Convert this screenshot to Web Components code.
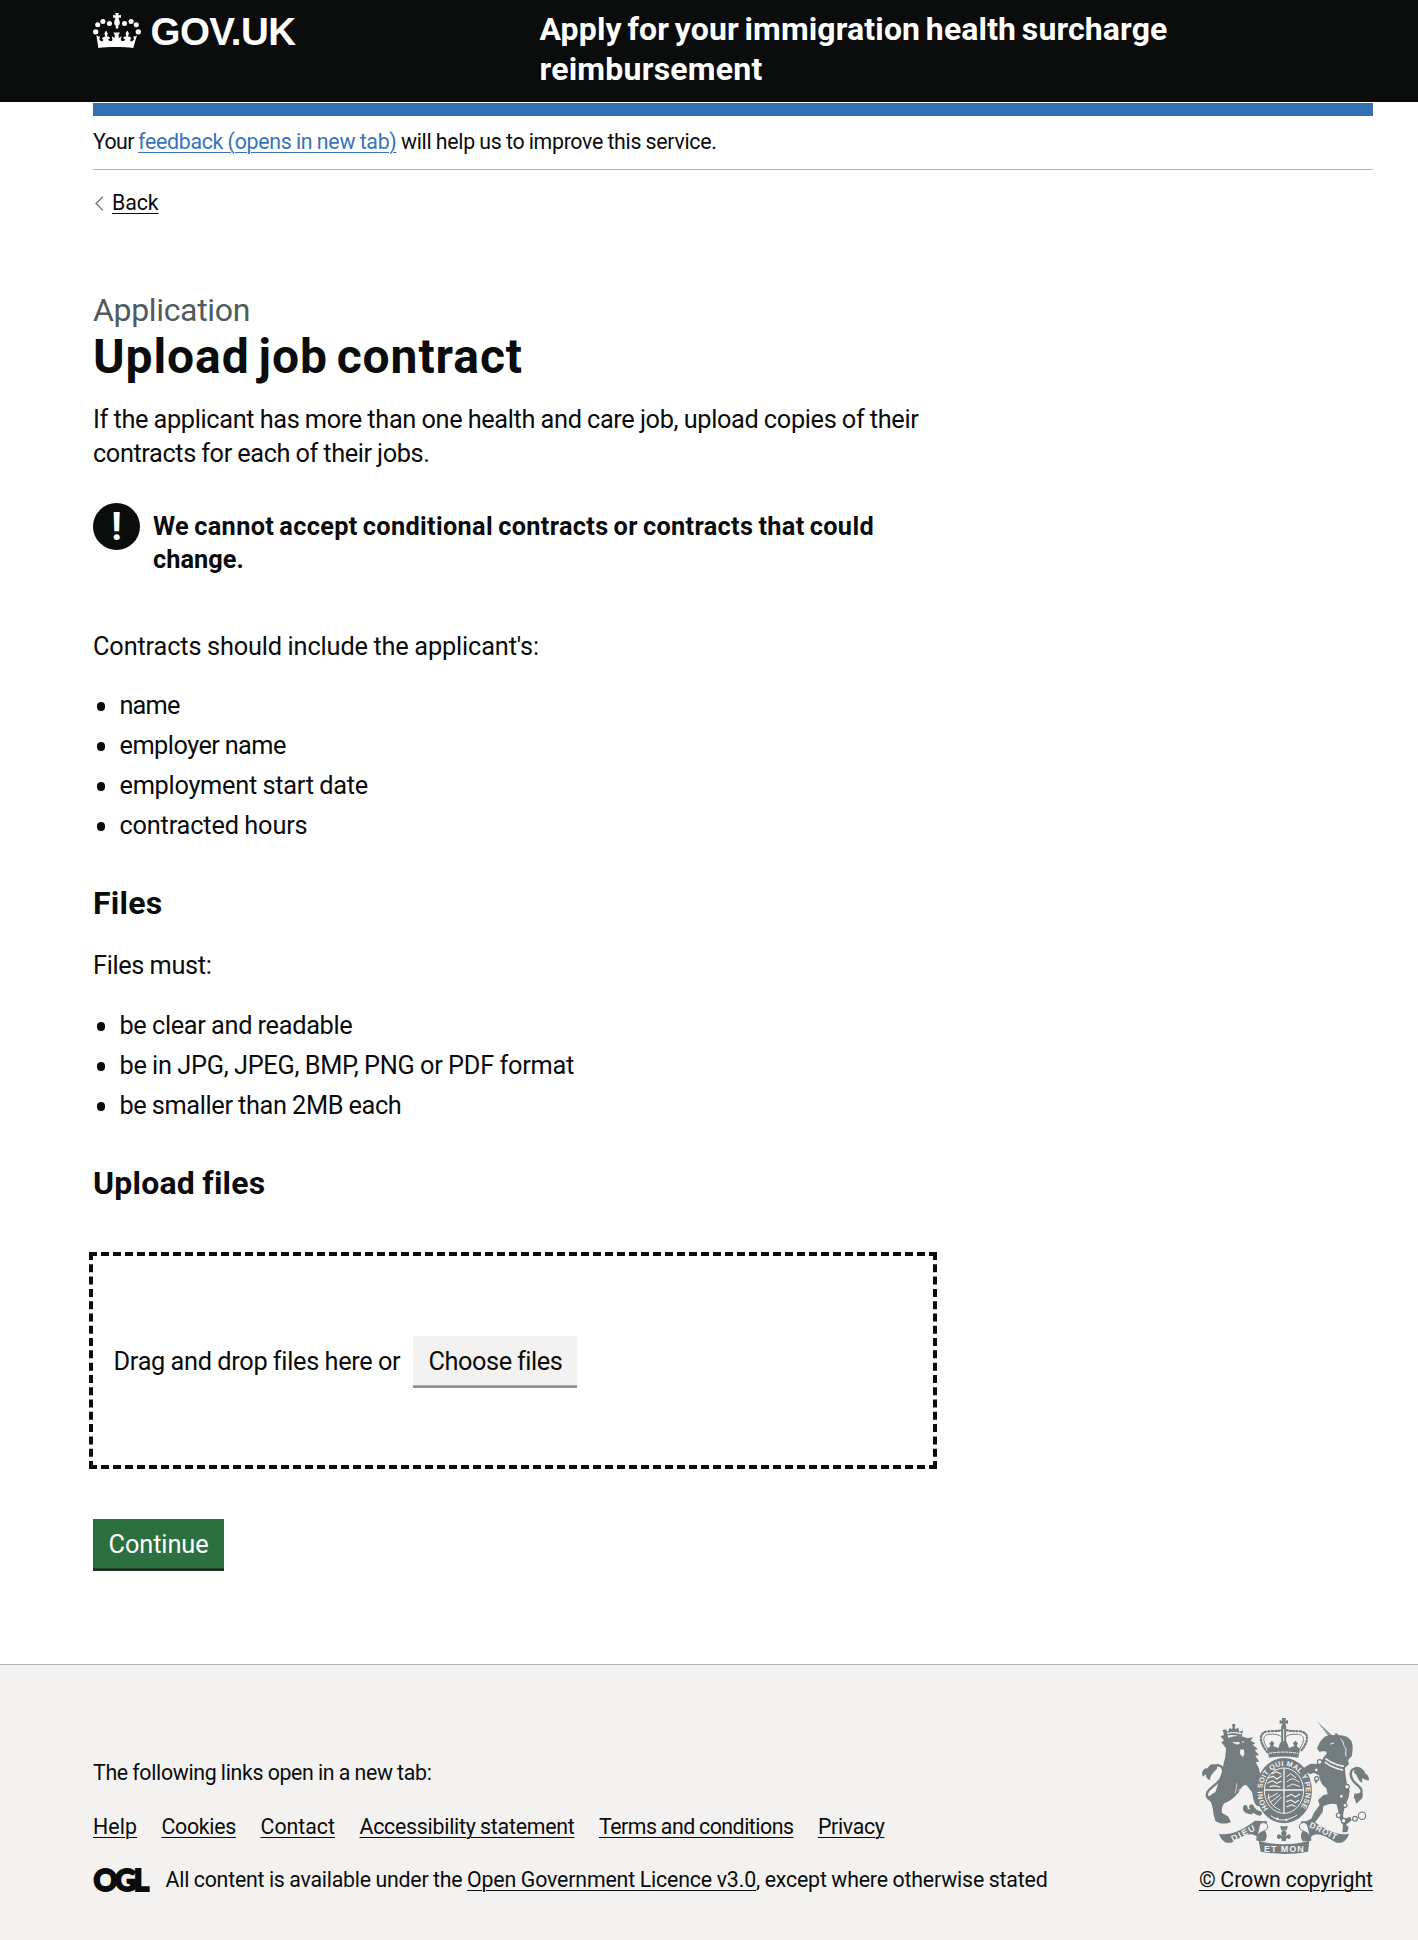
<!DOCTYPE html>
<html lang="en">
<head>
<meta charset="utf-8">
<title>Upload job contract</title>
<style>
body{margin:0;background:#fff;color:#0b0c0c;font-family:Roboto,"Liberation Sans",sans-serif;font-size:25.33px;line-height:33.33px;word-spacing:-.5px}
</style>
</head>
<body>
<surcharge-page></surcharge-page>
<script>
const define=(name,html,after)=>customElements.define(name,class extends HTMLElement{
  connectedCallback(){
    if(this.shadowRoot)return;
    this.attachShadow({mode:'open'}).innerHTML=html;
    if(after)after(this);
  }
});

/* One line of text tracked so that it fills the measure given in "w". */
define('fit-text','<style>:host{display:inline-block;white-space:nowrap}:host([block]){display:table}:host([u]){text-decoration:underline;text-decoration-thickness:1px;text-underline-offset:3px}</style><slot></slot>',el=>{
  const w=parseFloat(el.getAttribute('w'));
  const r=document.createRange();
  r.selectNodeContents(el);
  const now=r.getBoundingClientRect().width;
  el.style.letterSpacing=((w-now)/el.textContent.length).toFixed(4)+'px';
});

define('gov-crown',`<style>:host{display:block;width:48px;height:35px}svg{display:block}</style>
<svg width="48" height="35" viewBox="0 0 143 104" fill="#fff">
<circle cx="8" cy="56" r="8"/><circle cx="14" cy="35" r="7.5"/><circle cx="29.500" cy="25" r="7.500"/><circle cx="49" cy="31" r="7.500"/>
<circle cx="135" cy="56" r="8"/><circle cx="129" cy="35" r="7.500"/><circle cx="113.500" cy="25" r="7.500"/><circle cx="94" cy="31" r="7.500"/>
<path d="M66 0h11l-2 7 8-2v10l-7-2c0 4 4 10 4 16 0 5-3 7-5 9l1 4-4.500 6-4.500-6 1-4c-2-2-5-4-5-9 0-6 4-12 4-16l-7 2V5l8 2z"/>
<path d="M10 66l6 4 5-1-2 9c4 8 10 8 12 2l-5-5 6-4c3-1 5 0 5 0l-3-10 5-9 5 9-3 10c4-2 9 0 10 4l-6 4c3 6 11 6 13 1l-2-11 8 5 1-8-4-8h19l-4 8 1 8 8-5-2 11c2 5 10 5 13-1l-6-4c1-4 6-6 10-4l-3-10 5-9 5 9-3 10s3-2 6 0l5 4-5 5c2 6 8 6 12-2l-2-9 5 1 6-4-11 38c-26-4-78-4-104 0z"/>
</svg>`);

define('site-header',`<style>
:host{display:block;background:#0b0c0c;color:#fff;height:102px;overflow:hidden}
.in{display:grid;grid-template-columns:446.500px 1fr;width:1280px;margin-left:93px}
.logo{display:flex;align-items:flex-start;gap:9.500px;padding-top:13px}
.word{font-family:"Liberation Sans",sans-serif;font-size:38.500px;font-weight:700;line-height:40px;margin-top:-1.500px}
.name{font-size:32px;line-height:40px;font-weight:700;padding-top:9px;word-spacing:-2.400px}
</style><div class="in"><div class="logo"><gov-crown></gov-crown><fit-text class="word" w="145">GOV.UK</fit-text></div>
<div class="name"><fit-text block w="628">Apply for your immigration health surcharge</fit-text><fit-text block w="223">reimbursement</fit-text></div></div>`);

define('phase-banner',`<style>
:host{display:block;border-top:13px solid #356fb3;margin-top:1px;border-bottom:1px solid #b1b4b6;padding:13px 0;height:27px;font-size:21.33px;line-height:26.67px}
.row{display:flex}
a{color:#3873b9}
</style><div class="row"><fit-text w="45">Your&nbsp;</fit-text><a><fit-text u w="258.500">feedback (opens in new tab)</fit-text></a><fit-text w="320">&nbsp;will help us to improve this service.</fit-text></div>`);

define('back-link',`<style>
:host{display:flex;align-items:center;gap:8px;margin-top:20.400px;font-size:21.33px;line-height:26.67px}
svg{display:block;margin-left:2px}
</style><svg width="9" height="15" viewBox="0 0 9 15" fill="none" stroke="#6c7376" stroke-width="1.300"><path d="M8 .6 1 7.500 8 14.400"/></svg><a><fit-text u w="46.500">Back</fit-text></a>`);

define('warning-text',`<style>
:host{display:flex;gap:13px;margin-top:33px;font-weight:700;word-spacing:-1.500px}
.icon{display:flex;justify-content:center;width:47px;height:47px;border-radius:50%;background:#0b0c0c;color:#fff;font-size:39px;line-height:48px}
.text{padding-top:6.400px}
</style><div class="icon">!</div><div class="text"><slot></slot></div>`);

define('bullet-list',`<style>
:host{display:flex;flex-direction:column;gap:6.670px}
</style><slot></slot>`);
define('bullet-item',`<style>
:host{display:flex;align-items:center}
i{width:8.600px;height:8.600px;border-radius:50%;background:#0b0c0c;margin:.5px 14.200px 0 3.700px}
</style><i></i><slot></slot>`);

define('gov-button',`<style>
:host{display:flex;justify-content:center;box-sizing:border-box;height:51.700px;padding-top:9px;background:var(--bg);color:var(--fg);box-shadow:inset 0 -2.700px 0 var(--edge)}
</style><slot></slot>`);

define('drop-zone',`<style>
:host{display:flex;align-items:center;box-sizing:border-box;width:848px;height:217px;margin:49.200px 0 0 -4px;border:4px dashed #0b0c0c;padding:2px 0 0 20.500px}
gov-button{width:164px;margin-left:13px}
.hint{padding-top:1px}
</style><fit-text class="hint" w="286">Drag and drop files here or</fit-text><gov-button style="--bg:#f3f2f1;--fg:#0b0c0c;--edge:#929191"><fit-text w="133">Choose files</fit-text></gov-button>`);

define('upload-content',`<style>
:host{display:block;width:860px}
.cap{font-size:32px;line-height:40px;color:#505a5f;margin-top:72.800px}
h1{margin:0;font-size:48px;line-height:53px;word-spacing:-4px}
h2{font-size:32px;line-height:40px;margin:40.300px 0 0;word-spacing:-1px}
p{margin:0}
h1 fit-text,p fit-text,h2 fit-text,.cap fit-text{display:table}
</style>
<div class="cap"><fit-text w="157">Application</fit-text></div>
<h1><fit-text w="430">Upload job contract</fit-text></h1>
<p style="margin-top:20.600px"><fit-text w="825.500">If the applicant has more than one health and care job, upload copies of their</fit-text><fit-text w="336.500">contracts for each of their jobs.</fit-text></p>
<warning-text><fit-text block w="721">We cannot accept conditional contracts or contracts that could</fit-text><fit-text block w="91">change.</fit-text></warning-text>
<p style="margin-top:53.900px"><fit-text w="446">Contracts should include the applicant's:</fit-text></p>
<bullet-list style="margin-top:26px"><bullet-item><fit-text w="60">name</fit-text></bullet-item><bullet-item><fit-text w="166.500">employer name</fit-text></bullet-item><bullet-item><fit-text w="248.500">employment start date</fit-text></bullet-item><bullet-item><fit-text w="188">contracted hours</fit-text></bullet-item></bullet-list>
<h2><fit-text w="69.500">Files</fit-text></h2>
<p style="margin-top:26.100px"><fit-text w="118.500">Files must:</fit-text></p>
<bullet-list style="margin-top:27px"><bullet-item><fit-text w="233">be clear and readable</fit-text></bullet-item><bullet-item><fit-text w="454.500">be in JPG, JPEG, BMP, PNG or PDF format</fit-text></bullet-item><bullet-item><fit-text w="282">be smaller than 2MB each</fit-text></bullet-item></bullet-list>
<h2><fit-text w="172">Upload files</fit-text></h2>
<drop-zone></drop-zone>
<gov-button style="--bg:#2c7040;--fg:#fff;--edge:#173420;width:131px;margin-top:50px"><fit-text w="100">Continue</fit-text></gov-button>`);

define('royal-arms',`<style>:host{display:block;width:167px;height:136px}svg{display:block}text{font-family:"Liberation Sans",sans-serif;font-weight:700;fill:#f3f2f1;word-spacing:0}</style>
<svg width="167" height="136" viewBox="66 84 501 408" fill="#737c7e" stroke-linejoin="round" stroke-linecap="round">
<!-- crown over the shield -->
<path d="M305 84h13l-2 8 8-2v12l-8-2 2 9h-13l2-9-8 2V90l8 2z"/>
<g fill="none" stroke="#737c7e">
<path d="M262 186C232 150 240 126 264 124c22-2 39 2 48-10 9 12 26 8 48 10 24 2 32 26 0 62" stroke-width="7" stroke-dasharray="3 7"/>
<path d="M267 182c-25-33-17-49 3-49 20-1 31 2 36 10M355 182c25-33 17-49-3-49-20-1-31 2-36 10" stroke-width="3"/>
<path d="M311 112v50" stroke-width="15"/><path d="M311 118v40" stroke="#f3f2f1" stroke-width="3"/>
</g>
<path d="M262 176l10-8-4-8 8-8 7 8-4 8 16 6 4-12 5-8h14l5 8 4 12 16-6-4-8 7-8 8 8-4 8 10 8-5 27c-30-5-58-5-88 0z"/>
<path d="M268 190c28-5 58-5 86 0" fill="none" stroke="#f3f2f1" stroke-width="3" stroke-dasharray="8 4"/>
<!-- lion -->
<path d="M137 137l-3-18 10 6 5-12 7 5 5-15 6 15 8-5 3 13 11-6-4 20c-16-5-32-6-48-3z"/>
<circle cx="161" cy="106" r="5"/>
<path d="M142 130c13-3 27-3 41 1" fill="none" stroke="#f3f2f1" stroke-width="4" stroke-dasharray="5 4"/>
<path d="M145 144c17-8 39-9 57 1l17-3-7 10 14 8-8 4 16 14-10 2 13 16-11 1 12 18-11 1 9 17c4 22 15 42 29 50l-3 17 9 7-6 14c-13-1-19-9-23-18l-11-13 2 19 19 12 4 15c-6 9-13 15-22 12-14-4-14-25-18-42-9-9-13-20-20-21-13 2-14 19-27 30-13 13-23 21-36 25-7 8-9 20-7 29l18 10 9 17c-18 8-37 5-47-4l-5-17c-2-15-3-28-11-44-4-14 6-20 16-24l7-21c4-17 12-33 14-49l9-37 2-25-14-18 8-6-11-12 11-4-4-15 10-2z"/>
<path d="M157 155l12 2 8-2 3 5-8 4-11-4z" fill="#f3f2f1"/><path d="M185 154l8 1-5 4z" fill="#f3f2f1"/><path d="M181 178l11 1 1 14-5 8-8-10z" fill="#f3f2f1"/>
<path d="M196 352c-2 10 9 13 17 14M214 350c8 14 15 19 25 20" fill="none" stroke="#737c7e" stroke-width="14"/>
<g fill="none" stroke="#737c7e"><path d="M103 335C78 328 76 312 87 300c12-13 46-32 43-57-3-20-20-19-26-14" stroke-width="7"/></g>
<path d="M110 225c-16-7-24 2-27 10-8-2-13 3-17 12l2 13 9-7c0 10 6 15 13 18 1-18 12-24 22-36zM76 319l12-2 17 10 1 16-10-6z"/>
<path d="M171 281l-5 28M200 287l-26 15" fill="none" stroke="#f3f2f1" stroke-width="2"/>
<!-- unicorn -->
<path d="M410 93l52 49-8 7z"/><path d="M415 101l38 39" stroke="#f3f2f1" stroke-width="2" stroke-dasharray="5 4"/>
<path d="M463 136l5-8 8 8c21 0 31 7 38 17 7 15 3 29 2 44l-12 14 3 12-12 10c1 25 4 50 14 69l-3 20-11 27c-5 20-8 28-3 38l19-7 4 11-17 13 8 8-4 14-15 1 2-21-10-20c-3-21-7-32-9-43-15-4-27-1-40 6l-2 17-17 23-12 16-11 6-15-2 8-16 14-8 6-15 18-25-5-15 17-15 12-2-4-18c-15-12-20-23-22-40l-15-7-11 5-16-9-11 8 13 16 2 16-15-9-15-21-4-17 19 5 11-11 17-10 28 1 11-20 10-12-6-7-17 2-7-10 9-20 14-15 16-6z"/>
<path d="M482 147c11 7 6 18 13 25s-1 16 3 26M452 162l9-3" fill="none" stroke="#f3f2f1" stroke-width="3"/>
<path d="M438 207c18 12 36 19 55 22M436 217c17 13 34 19 52 23" fill="none" stroke="#f3f2f1" stroke-width="5" stroke-dasharray="8 4"/>
<g fill="none" stroke="#737c7e"><path d="M525 322c30-13 20-27 7-37-23-17-28-47-4-50 14-1 20 8 24 13" stroke-width="7"/></g>
<path d="M525 231c18-3 24 9 27 18 9 2 13 9 16 20-7 6-16-2-20-5-2 3-2 9-1 14-15-4-13-24-25-30zM522 311l27-2-2 15-18 17-5-15z"/>
<path d="M393 239l23-20-2 37zM402 270l12 1-6 11z"/>
<g fill="#f3f2f1" stroke="#737c7e" stroke-width="3.500"><circle cx="419" cy="216" r="7"/><circle cx="409" cy="240" r="6"/><circle cx="410" cy="266" r="6"/><circle cx="501" cy="290" r="7"/><circle cx="484" cy="319" r="6"/><circle cx="495" cy="346" r="6"/><circle cx="476" cy="376" r="7"/><circle cx="491" cy="392" r="7"/><circle cx="525" cy="386" r="7"/><circle cx="546" cy="377" r="11"/></g>
<!-- motto ribbon -->
<path d="M117 431c33 8 74-13 108-39l35 2 2 12c-7-8-16-7-20 0 17 21 24 28 13 48l-23-1-1-12c-15-15-34-9-77 17-22 4-32-12-37-27z"/>
<path d="M507 431c-33 8-74-13-108-39l-35 2-3 12c8-8 17-7 20 0-17 21-24 28-13 48l24-1 1-12c14-15 33-9 76 17 23 4 33-12 38-27z"/>
<path d="M241 402c7-9 23-4 22 9-1 17-35 9-33 39M380 402c-7-9-23-4-22 9 1 17 34 9 35 39" stroke="#737c7e" stroke-width="3" fill="#f3f2f1"/>
<path d="M236 452c49 14 101 14 152 0l-4 33c-48 9-96 9-142 0z"/>
<text font-size="26" transform="translate(159 455) rotate(-27)" textLength="76">DIEU</text>
<text font-size="25" transform="translate(386 411) rotate(26)" textLength="89">DROIT</text>
<text font-size="27" x="252" y="485" textLength="119">ET MON</text>
<path d="M300 409h24l-5 13-7-6-7 6zM312 416l8 13-4 12c9-13 17-9 16 0-1 8-9 7-9 3-4 0-6 4-5 9h-13c1-5-1-9-5-9 0 4-8 5-9-3-1-9 8-13 16 0l-4-12z"/>
<!-- shield and garter -->
<ellipse cx="312" cy="302" rx="84" ry="98"/>
<ellipse cx="312" cy="302" rx="59" ry="68" fill="none" stroke="#f3f2f1" stroke-width="3"/>
<path id="garter" d="M266 356A65 75 0 1 1 358 356" fill="none"/>
<text font-size="22"><textPath href="#garter" textLength="328">HONI SOIT QUI MAL Y PENSE</textPath></text>
<g fill="none" stroke="#f3f2f1">
<path d="M254 300h116M312 237v132" stroke-width="4"/>
<path d="M264 264l15-5 12 8 13-9M263 279l14-7 14 8 13-6M270 290l13-3 17 4M276 251l13-6 14 7" stroke-width="3.500"/>
<path d="M320 260l12-9 15 12M322 275c12-13 20-10 35 1M322 290l16-8 20 7" stroke-width="3"/>
<path d="M264 325l28-15M270 337l30-22M279 348l25-26M266 313v12c8 20 18 27 34 35" stroke-width="3"/>
<path d="M320 320l14-7 12 8 13-8M320 335l13-5 12 8 11-7M321 350l14-6 10 5" stroke-width="3.500"/>
<path d="M274 378c22 17 46 16 76-2" stroke-width="3"/>
</g>
<circle cx="292" cy="386" r="3.500" fill="#f3f2f1"/><circle cx="319" cy="390" r="3.500" fill="#f3f2f1"/>
</svg>`);

define('site-footer',`<style>
:host{display:block;box-sizing:border-box;height:276px;margin-top:93.300px;border-top:1px solid #b1b4b6;background:#f3f2f1;font-size:21.33px;line-height:26.67px}
.in{display:flex;justify-content:space-between;width:1280px;margin-left:93px}
.left{display:flex;flex-direction:column;align-items:flex-start;padding-top:95px}
.links{display:flex;gap:24.500px;margin-top:27.500px}
.lic{display:flex;margin-top:26px}
.ogl{font-family:Lato,sans-serif;font-weight:900;font-size:29.500px;line-height:25px;-webkit-text-stroke:1.800px #0b0c0c;width:72.500px;padding-left:.5px;box-sizing:border-box}
.right{display:flex;flex-direction:column;align-items:flex-end;padding-top:53px}
royal-arms{margin:0 4px 13px 0}
</style><div class="in"><div class="left"><fit-text w="338.500">The following links open in a new tab:</fit-text>
<div class="links"><a><fit-text u w="44">Help</fit-text></a><a><fit-text u w="74.500">Cookies</fit-text></a><a><fit-text u w="74.500">Contact</fit-text></a><a><fit-text u w="215">Accessibility statement</fit-text></a><a><fit-text u w="194.500">Terms and conditions</fit-text></a><a><fit-text u w="66.500">Privacy</fit-text></a></div>
<div class="lic"><div class="ogl"><fit-text w="53">OGL</fit-text></div><fit-text w="301.500">All content is available under the&nbsp;</fit-text><a><fit-text u w="289">Open Government Licence v3.0</fit-text></a><fit-text w="291.500">, except where otherwise stated</fit-text></div></div>
<div class="right"><royal-arms></royal-arms><a><fit-text u w="174">© Crown copyright</fit-text></a></div></div>`);

define('surcharge-page',`<style>:host{display:block}main{width:1280px;margin-left:93px}</style>
<site-header></site-header><main><phase-banner></phase-banner><back-link></back-link><upload-content></upload-content></main><site-footer></site-footer>`);
</script>
</body>
</html>
